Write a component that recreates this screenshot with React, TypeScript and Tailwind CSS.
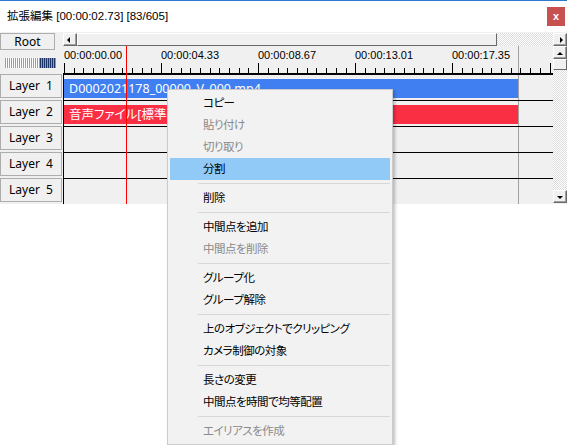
import React from 'react';

type MenuEntry = { label?: string; disabled?: boolean; active?: boolean; sep?: boolean };

const menuItems: MenuEntry[] = [
  { label: 'コピー' },
  { label: '貼り付け', disabled: true },
  { label: '切り取り', disabled: true },
  { label: '分割', active: true },
  { sep: true },
  { label: '削除' },
  { sep: true },
  { label: '中間点を追加' },
  { label: '中間点を削除', disabled: true },
  { sep: true },
  { label: 'グループ化' },
  { label: 'グループ解除' },
  { sep: true },
  { label: '上のオブジェクトでクリッピング' },
  { label: 'カメラ制御の対象' },
  { sep: true },
  { label: '長さの変更' },
  { label: '中間点を時間で均等配置' },
  { sep: true },
  { label: 'エイリアスを作成', disabled: true },
];

const labels = ['00:00:00.00', '00:00:04.33', '00:00:08.67', '00:00:13.01', '00:00:17.35'];

const ScrollButton = ({ dir }: { dir: 'left' | 'right' | 'up' | 'down' }) => {
  const points = {
    left: '6,3 6,9 3,6',
    right: '6,3 6,9 9,6',
    up: '3,8 9,8 6,5',
    down: '3,5 9,5 6,8',
  }[dir];
  return (
    <div className="w-[14px] h-[13px] shrink-0 bg-[#f0f0f0] border-t border-l border-white border-r border-b border-r-[#696969] border-b-[#696969] shadow-[inset_-1px_-1px_0_#a0a0a0] flex items-center justify-center">
      <svg width="12" height="12" viewBox="0 0 12 12">
        <polygon points={points} fill="#000" />
      </svg>
    </div>
  );
};

const Ruler = () => {
  const ticks = [];
  for (let i = 0; i <= 50; i++) {
    const x = Math.round(1 + i * 9.71) + 0.5;
    const major = i % 10 === 0;
    ticks.push(<line key={i} x1={x} x2={x} y1={major ? 17 : 22} y2={27} stroke="#000" strokeWidth="1" />);
  }
  return (
    <div className="relative h-[28px] w-[490px]">
      <div className="flex pl-[1px] pt-[2px] text-[11px] leading-[14px] text-black font-['Liberation_Sans',sans-serif]">
        {labels.map((l) => (
          <div key={l} className="w-[97px] shrink-0">{l}</div>
        ))}
      </div>
      <svg className="absolute left-0 top-0" width="490" height="28">
        {ticks}
        <line x1="0" x2="490" y1="27.5" y2="27.5" stroke="#000" />
        <line x1="455.5" x2="455.5" y1="0" y2="27" stroke="#a0a0a0" />
      </svg>
    </div>
  );
};

const Row = ({ clip }: { clip?: { color: string; text: string } }) => (
  <div className="h-[26px] flex border-t border-black border-l bg-[#f0f0f0]">
    <div className="w-[455px] shrink-0 border-r border-[#a0a0a0] pt-[4px] pb-[2px]">
      {clip && (
        <div className={`h-[19px] ${clip.color} text-white text-[12.5px] leading-[19px] pl-[5px] whitespace-nowrap overflow-hidden font-['Noto_Sans','Noto_Sans_CJK_JP',sans-serif] [font-feature-settings:'palt']`}>
          {clip.text}
        </div>
      )}
    </div>
    <div className="flex-1" />
  </div>
);

export default function App() {
  const checker = 'bg-[repeating-conic-gradient(#dcdcdc_0_25%,#ffffff_0_50%)] bg-[length:2px_2px]';
  return (
    <div className="relative w-[567px] h-[445px] bg-white overflow-hidden font-['Noto_Sans','Noto_Sans_CJK_JP',sans-serif] text-black">
      <div className="h-[1px] bg-[#2b79d0]" />
      {/* title bar */}
      <div className="h-[31px] flex items-center justify-between pl-[7px] pr-[2px]">
        <span className="text-[11.5px] font-['Liberation_Sans','Noto_Sans_CJK_JP',sans-serif]">拡張編集 [00:00:02.73] [83/605]</span>
        <div className="w-[18px] h-[19px] bg-[#c75050] flex items-center justify-center text-white text-[11px] font-bold leading-none font-['Liberation_Sans',sans-serif]">
          x
        </div>
      </div>

      {/* editor */}
      <div className="h-[172px] flex bg-[#f0f0f0]">
        <div className="w-[63px] shrink-0 flex flex-col">
          <div className="mt-[1px] ml-0 w-[55px] h-[17px] border border-[#adadad] bg-[#f0f0f0] flex items-center justify-center text-[12px] leading-none">
            Root
          </div>
          <div className="mt-[8px] ml-[5px] flex h-[10px]">
            <div className="w-[35px] bg-[repeating-linear-gradient(90deg,#6ea6e6_0_1px,#ffffff_1px_2px)]" />
            <div className="w-[16px] bg-[repeating-linear-gradient(90deg,#1c3566_0_1px,#8b9ab8_1px_2px)]" />
          </div>
          <div className="mt-[5px] flex flex-col">
            {[1, 2, 3, 4, 5].map((n) => (
              <div key={n} className="h-[26px] py-[1px] pr-[1px]">
                <div className="h-full border border-[#adadad] bg-[#f0f0f0] flex items-center justify-center text-[12px] whitespace-pre">
                  {`Layer  ${n}`}
                </div>
              </div>
            ))}
          </div>
        </div>

        <div className="flex-1 flex flex-col relative">
          {/* horizontal scrollbar */}
          <div className="flex h-[13px] mt-[1px]">
            <ScrollButton dir="left" />
            <div className="w-[420px] shrink-0 bg-[#f0f0f0] border-t border-l border-white border-r border-b border-r-[#696969] border-b-[#696969]" />
            <div className={`flex-1 ${checker}`} />
            <ScrollButton dir="right" />
          </div>
          <div className="flex flex-1">
            <div className="w-[490px] shrink-0 flex flex-col">
              <Ruler />
              <Row clip={{ color: 'bg-[#3f7ff2]', text: 'D0002021178_00000_V_000.mp4' }} />
              <Row clip={{ color: 'bg-[#fb2f44]', text: '音声ファイル[標準再生]' }} />
              <Row />
              <Row />
              <Row />
            </div>
            <div className="flex-1 flex flex-col">
              <ScrollButton dir="up" />
              <div className="h-[11px] bg-[#f0f0f0] border-t border-l border-white border-r border-b border-r-[#696969] border-b-[#696969]" />
              <div className={`flex-1 ${checker}`} />
              <div className="mb-[1px]">
                <ScrollButton dir="down" />
              </div>
            </div>
          </div>
          {/* playhead */}
          <div className="absolute left-[63px] top-[14px] bottom-0 w-px bg-[#ff0000]" />
        </div>
      </div>

      {/* context menu */}
      <div className="absolute left-[167px] top-[89px] w-[226px] border border-[#cccccc] bg-[#f2f2f2] p-[2px] shadow-[2px_2px_3px_rgba(0,0,0,0.25)] font-['Noto_Sans_CJK_JP',sans-serif] [font-feature-settings:'palt']">
        {menuItems.map((m, i) =>
          m.sep ? (
            <div key={i} className="h-[7px] flex items-center pl-[28px]">
              <div className="h-px flex-1 bg-[#d7d7d7]" />
            </div>
          ) : (
            <div
              key={i}
              className={`h-[22px] flex items-center pl-[33px] text-[11.5px] tracking-[-0.5px] ${m.active ? 'bg-[#91c9f7]' : ''} ${
                m.disabled ? 'text-[#8a8a8a]' : 'text-black'
              }`}
            >
              {m.label}
            </div>
          )
        )}
      </div>
    </div>
  );
}
